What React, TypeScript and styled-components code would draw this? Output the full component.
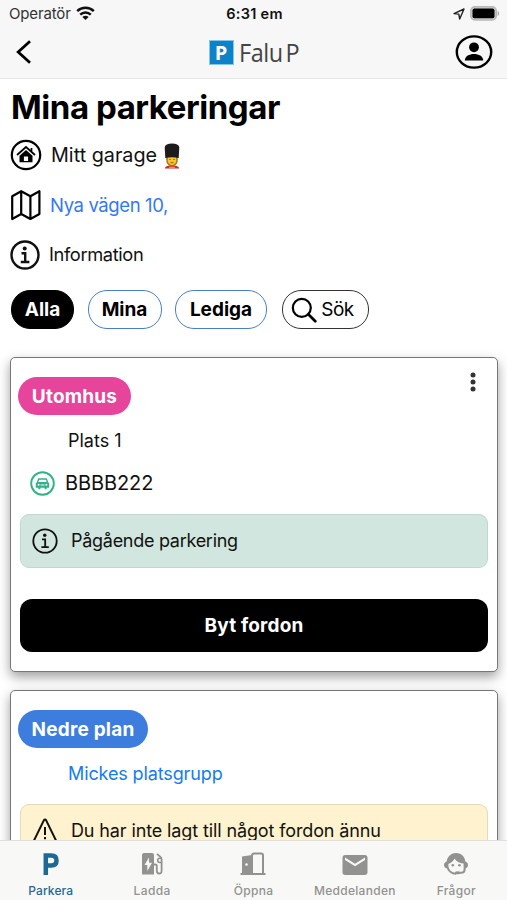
import React from "react";
import styled, { createGlobalStyle } from "styled-components";
import { MdEmail } from "react-icons/md";

const GlobalStyle = createGlobalStyle`
  * { box-sizing: border-box; }
  body { margin: 0; background: #fff; font-family: Inter, "Liberation Sans", sans-serif; color: #111; }
  svg { display: block; flex: none; }
  button { font: inherit; color: inherit; background: none; border: 0; padding: 0; }
`;

const Label = styled.span<{ $size: number; $weight?: number; $track?: number; $color?: string }>`
  font-size: ${(p) => p.$size}px;
  font-weight: ${(p) => p.$weight ?? 400};
  letter-spacing: ${(p) => p.$track ?? 0}px;
  color: ${(p) => p.$color ?? "inherit"};
  line-height: 1.2;
  white-space: nowrap;
`;

const Screen = styled.div`
  display: flex;
  flex-direction: column;
  height: 100vh;
  overflow: hidden;
`;

const Header = styled.header`
  height: 79px;
  flex: none;
  background: #f7f7f7;
  border-bottom: 1px solid #e6e6e6;
`;

const StatusBar = styled.div`
  display: grid;
  grid-template-columns: 1fr auto 1fr;
  align-items: center;
  height: 27px;
  padding: 0 7px 0 9px;
`;

const StatusGroup = styled.div<{ $end?: boolean }>`
  display: flex;
  align-items: center;
  justify-content: ${(p) => (p.$end ? "flex-end" : "flex-start")};
  gap: 5px;
`;

const NavBar = styled.div`
  display: grid;
  grid-template-columns: 1fr auto 1fr;
  align-items: center;
  height: 50px;
  padding: 0 14px 0 16px;
  > :last-child { justify-self: end; }
`;

const Brand = styled.div`
  display: flex;
  align-items: center;
  gap: 5px;
  width: 92px;
`;

const BrandMark = styled.span`
  display: grid;
  place-items: center;
  flex: none;
  width: 25px;
  height: 25px;
  background: #0c83c9;
  border: 1px solid #86c5e8;
  color: #fff;
  font: 700 20px/23px "Open Sans", sans-serif;
`;

const BrandName = styled.span`
  font: 400 25.5px/30px "Open Sans", sans-serif;
  letter-spacing: -0.5px;
  word-spacing: -3px;
  color: #444;
  white-space: nowrap;
  transform: scaleX(0.92);
  transform-origin: left center;
`;

const Content = styled.main`
  flex: 1;
  min-height: 0;
  overflow: hidden;
  padding: 0 9px 0 10px;
`;

const Title = styled.h1`
  margin: 0;
  height: 51px;
  padding: 8px 0 0 1px;
  font-size: 33px;
  line-height: 40px;
  font-weight: 700;
  letter-spacing: -0.45px;
  color: #000;
  white-space: nowrap;
`;

const InfoRow = styled.div<{ $gap: number }>`
  display: flex;
  align-items: center;
  height: 50px;
  gap: ${(p) => p.$gap}px;
`;

const GarageName = styled.div`
  display: flex;
  align-items: center;
  gap: 6px;
  padding-top: 2px;
`;

const Filters = styled.div`
  display: flex;
  align-items: center;
  gap: 13.5px;
  height: 39px;
  margin: 10px 0 28px 1px;
`;

const Pill = styled.button<{ $width: number; $tone: "solid" | "blue" | "dark" }>`
  display: flex;
  align-items: center;
  justify-content: center;
  gap: 4px;
  width: ${(p) => p.$width}px;
  height: 39px;
  padding-top: 1px;
  padding-right: ${(p) => (p.$tone === "dark" ? 5 : 0)}px;
  border-radius: 19px;
  border: 1.5px solid ${(p) => (p.$tone === "blue" ? "#477fc4" : p.$tone === "dark" ? "#333" : "#000")};
  background: ${(p) => (p.$tone === "solid" ? "#000" : "#fff")};
  color: ${(p) => (p.$tone === "solid" ? "#fff" : "#000")};
  &:last-child { margin-left: 1px; }
`;

const Card = styled.article`
  position: relative;
  height: 315px;
  margin-bottom: 18px;
  padding: 20px 9px 0;
  border: 1px solid #777;
  border-radius: 5px;
  background: #fff;
  box-shadow: 0 5px 12px rgba(0, 0, 0, 0.38);
`;

const Tag = styled.div<{ $color: string; $width: number }>`
  display: flex;
  align-items: center;
  justify-content: center;
  width: ${(p) => p.$width}px;
  height: 38px;
  margin: -1px 0 0 -2px;
  padding-top: 2px;
  border-radius: 19px;
  background: ${(p) => p.$color};
`;

const Place = styled.div`
  display: flex;
  align-items: center;
  height: 50px;
  padding: 2px 0 0 48px;
`;

const Vehicle = styled.div`
  display: flex;
  align-items: center;
  gap: 10px;
  height: 36px;
  padding-left: 10px;
`;

const Notice = styled.div<{ $warn?: boolean }>`
  display: flex;
  align-items: center;
  gap: 13px;
  height: 54px;
  margin-top: ${(p) => (p.$warn ? 6 : 13)}px;
  padding-left: 11px;
  border: 1px solid ${(p) => (p.$warn ? "#e3dabb" : "#bfd9ce")};
  border-radius: 9px;
  background: ${(p) => (p.$warn ? "#fff2ce" : "#d1e6de")};
`;

const Action = styled.button`
  display: block;
  width: 100%;
  height: 53px;
  margin-top: 31px;
  padding-top: 2px;
  border-radius: 12px;
  background: #000;
`;

const MoreButton = styled.button`
  position: absolute;
  top: 14px;
  right: 21px;
`;

const TabBar = styled.nav`
  display: grid;
  grid-template-columns: repeat(5, 1fr);
  flex: none;
  height: 60px;
  background: #f8f8f7;
  border-top: 1px solid #dededb;
`;

const Tab = styled.div<{ $active?: boolean }>`
  display: flex;
  flex-direction: column;
  align-items: center;
  padding-top: 9px;
  gap: 7px;
  color: ${(p) => (p.$active ? "#1c6a94" : "#929290")};
`;

const TabIcon = styled.div`
  display: grid;
  place-items: center;
  height: 27px;
`;

const Wifi = () => (
  <svg width="19" height="15" viewBox="0 0 19 15" fill="none" stroke="#111" strokeWidth="2.5">
    <path d="M1.2 5.2C5.8.7 13.2.7 17.8 5.2M4.2 8.6c3-2.9 7.6-2.9 10.6 0" />
    <path d="M9.5 14 6.4 11c1.7-1.6 4.5-1.6 6.2 0Z" fill="#111" stroke="none" />
  </svg>
);

const LocationArrow = () => (
  <svg width="12" height="12" viewBox="0 0 12 12" fill="none" stroke="#222" strokeWidth="1.4" strokeLinejoin="round">
    <path d="M1 5.6 11 1 6.7 11 5.8 6.1Z" />
  </svg>
);

const Battery = () => (
  <svg width="30" height="15" viewBox="0 0 30 15">
    <rect x=".8" y=".8" width="25.5" height="13.2" rx="4" fill="#ccc" stroke="#b8b8b8" strokeWidth="1.4" />
    <rect x="2.5" y="2.5" width="22" height="9.8" rx="2" fill="#000" />
    <path d="M27.6 5v5c2-.8 2-4.2 0-5Z" fill="#aaa" />
  </svg>
);

const BackIcon = () => (
  <svg width="16" height="24" viewBox="0 0 16 24" fill="none" stroke="#000" strokeWidth="2.8">
    <path d="M14 1.2 2.2 12 14 22.8" />
  </svg>
);

const ProfileIcon = () => (
  <svg width="38" height="34" viewBox="0 0 38 34">
    <ellipse cx="19" cy="17" rx="17.2" ry="15.6" fill="none" stroke="#000" strokeWidth="2.4" />
    <circle cx="19" cy="12.3" r="4.9" />
    <path d="M9.8 25.5c0-4.4 4.6-6.5 9.2-6.5s9.2 2.1 9.2 6.5Z" />
  </svg>
);

const GarageIcon = () => (
  <svg width="32" height="32" viewBox="0 0 32 32">
    <circle cx="16" cy="16" r="14.2" fill="none" stroke="#000" strokeWidth="2.2" />
    <path d="m7 16 9-8 9 8M21.5 9v4" fill="none" stroke="#000" strokeWidth="1.7" />
    <path d="m16 11 6.5 5.800v6.500h-13v-6.500Z" />
    <path d="M13.900 17.500h4.200v4.500h-4.200z" fill="#fff" />
  </svg>
);

const Guard = () => (
  <svg width="18" height="26" viewBox="0 0 18 26">
    <path d="M1.8 25.500c.4-2.200 3.200-2.900 5.200-2.900h4c2 0 4.800.7 5.200 2.900Z" fill="#c42c27" />
    <path d="M3 13h12l-.4 5.500c-.4 2.700-3.200 5-5.600 5s-5.200-2.300-5.600-5Z" fill="#a9701c" />
    <path d="M4.800 13.500h8.400v5c-.5 2.200-2.500 3.500-4.200 3.500s-3.700-1.300-4.200-3.500Z" fill="#f7c62c" />
    <path d="M6 24.300h6" stroke="#edb52d" strokeWidth="1" />
    <path d="M1.700 4.200Q2.500.5 9 .5t7.300 3.700L15.700 15Q9 13.400 2.300 15Z" fill="#1d1b1b" />
    <path d="M6.300 16.500h1.400M10.300 16.500h1.400M7.500 19.300q1.500 1 3 0" stroke="#79501c" strokeWidth=".9" fill="none" />
  </svg>
);

const MapIcon = () => (
  <svg width="32" height="32" viewBox="0 0 32 32" fill="none" stroke="#000" strokeWidth="2.2" strokeLinejoin="round">
    <path d="m2.200 7.200 9-5 9.200 5 9-5v22.800l-9 5-9.200-5-9 5ZM11.200 2.200v22.800M20.400 7.200v22.800" />
  </svg>
);

const InfoIcon = ({ size, weight }: { size: number; weight: number }) => (
  <svg width={size} height={size} viewBox="0 0 30 30" fill="none" stroke="currentColor" strokeWidth={weight}>
    <circle cx="15" cy="15" r="13.5" />
    <circle cx="14.7" cy="8.4" r="2" fill="currentColor" stroke="none" />
    <path d="M11.5 13.200h3.700v8.500M10.800 22h8.600" />
  </svg>
);

const SearchIcon = () => (
  <svg width="26" height="26" viewBox="0 0 26 26" fill="none" stroke="#000" strokeLinecap="round">
    <circle cx="10.8" cy="10.8" r="9" strokeWidth="2.2" />
    <path d="m17.300 17.300 7 7" strokeWidth="2.7" />
  </svg>
);

const CarIcon = () => (
  <svg width="25" height="25" viewBox="0 0 25 25">
    <circle cx="12.5" cy="12.5" r="11.3" fill="none" stroke="#2db384" strokeWidth="1.9" />
    <path d="M8.200 7.200h8.600l1.400 4 1 1v4.600h-2.600v1.400h-2v-1.400H10.400v1.400h-2v-1.400H5.800v-4.600l1-1Z" fill="#2db384" />
    <path d="M9.200 8.800h6.600l.9 2.300H8.300Z" fill="#fff" />
    <circle cx="8.6" cy="13.7" r="1" fill="#fff" />
    <circle cx="16.4" cy="13.7" r="1" fill="#fff" />
    <path d="M10.500 14h4" stroke="#fff" strokeWidth="1" />
  </svg>
);

const WarningIcon = () => (
  <svg width="26" height="26" viewBox="0 0 26 26" fill="none" stroke="#111" strokeWidth="2" strokeLinejoin="round">
    <path d="M11.700 2.600q1.300-2 2.600 0L24.500 23.500q.4 1.500-1.200 1.500H2.700q-1.600 0-1.200-1.500Z" />
    <path d="M13 9v8M13 19v2.300" />
  </svg>
);

const MoreIcon = () => (
  <svg width="6" height="20" viewBox="0 0 6 20" fill="#333">
    <circle cx="3" cy="3" r="2.5" /><circle cx="3" cy="10" r="2.5" /><circle cx="3" cy="17" r="2.5" />
  </svg>
);

const ParkIcon = () => (
  <svg width="18" height="24" viewBox="0 0 18 24" fill="none" stroke="currentColor" strokeWidth="4.5">
    <path d="M3.800 23V3.500h5.500q5.200 0 5.200 5T9.300 13.500H3.800" />
  </svg>
);

const ChargeIcon = () => (
  <svg width="23" height="24" viewBox="0 0 23 24">
    <path d="M3 1h8q2 0 2 2v19.500H1V3q0-2 2-2Z" fill="currentColor" />
    <path d="M8 5.500 3.500 13H6.300v6L11 10.800H8Z" fill="#f8f8f7" />
    <path d="M13 12.500h1.200q1.600 0 1.600 1.700v4.500q0 2.800 2.400 2.800t2.400-2.800V7.500q0-1.500-1.200-2.600L16 1.800" fill="none" stroke="currentColor" strokeWidth="1.8" />
    <path d="M20.500 6.200h-1.800q-2 0-2 2.100t2 2.200h1.800" fill="none" stroke="currentColor" strokeWidth="1.6" />
  </svg>
);

const DoorIcon = () => (
  <svg width="26" height="24" viewBox="0 0 26 24" fill="currentColor">
    <path d="M2 4.500 12 3V22H2Z" />
    <path d="M12 4q0-2.500 2-2.500h7.200q1.800 0 1.800 1.800V22H12Z" fill="none" stroke="currentColor" strokeWidth="2" />
    <path d="M.5 21h25v2H.5Z" />
    <circle cx="6.5" cy="12.5" r="1.3" fill="#f8f8f7" />
  </svg>
);

const AgentIcon = () => (
  <svg width="26" height="24" viewBox="0 0 26 24">
    <path d="M3.500 12C3.500 5 7.500 1 13 1s9.500 4 9.500 10.500c-5 .3-8.800-1.500-11-5C10.300 9.500 7 12.200 3.500 12Z" fill="currentColor" />
    <path d="M4.400 11v3.500c.8 4.500 4.300 7.300 8.600 7.300M21.600 11v6.500q0 3.200-3.300 3.200H13" fill="none" stroke="currentColor" strokeWidth="2" />
    <path d="M4 9.500q-3 .8-3 3.500T4 16.500ZM22 9.500q3 .8 3 3.500t-3 3.500Z" fill="currentColor" />
    <circle cx="9.8" cy="13.3" r="1.3" fill="currentColor" />
    <circle cx="16.4" cy="13.3" r="1.3" fill="currentColor" />
    <rect x="12" y="19.4" width="5" height="2.8" rx="1.3" fill="currentColor" />
  </svg>
);

const tabs = [
  { name: "Parkera", icon: <ParkIcon />, active: true, track: 0.1 },
  { name: "Ladda", icon: <ChargeIcon />, track: 0.35 },
  { name: "Öppna", icon: <DoorIcon />, track: 0.3 },
  { name: "Meddelanden", icon: <MdEmail size={30} />, track: 0.28 },
  { name: "Frågor", icon: <AgentIcon />, track: 0.3 },
];

export default function App() {
  return (
    <Screen>
      <GlobalStyle />
      <Header>
        <StatusBar>
          <StatusGroup>
            <Label $size={15} $track={-0.15} $color="#333">Operatör</Label>
            <Wifi />
          </StatusGroup>
          <Label $size={14.5} $weight={600} $track={0.3}>6:31 em</Label>
          <StatusGroup $end><LocationArrow /><Battery /></StatusGroup>
        </StatusBar>
        <NavBar>
          <BackIcon />
          <Brand><BrandMark>P</BrandMark><BrandName>Falu P</BrandName></Brand>
          <ProfileIcon />
        </NavBar>
      </Header>
      <Content>
        <Title>Mina parkeringar</Title>
        <InfoRow $gap={9}>
          <GarageIcon />
          <GarageName>
            <Label $size={19.8}>Mitt garage</Label>
            <Guard />
          </GarageName>
        </InfoRow>
        <InfoRow $gap={8}>
          <MapIcon />
          <Label $size={18.5} $track={-0.38} $color="#3478f6">Nya vägen 10,</Label>
        </InfoRow>
        <InfoRow $gap={9}>
          <InfoIcon size={30} weight={2.4} />
          <Label $size={18.3} $track={-0.38}>Information</Label>
        </InfoRow>
        <Filters>
          <Pill $width={63} $tone="solid"><Label $size={19} $weight={700}>Alla</Label></Pill>
          <Pill $width={74} $tone="blue"><Label $size={19} $weight={700}>Mina</Label></Pill>
          <Pill $width={92} $tone="blue"><Label $size={19} $weight={700}>Lediga</Label></Pill>
          <Pill $width={87} $tone="dark"><SearchIcon /><Label $size={19} $track={-0.5}>Sök</Label></Pill>
        </Filters>
        <Card>
          <Tag $color="#e6459b" $width={113}><Label $size={19} $weight={700} $track={0.2} $color="#fff">Utomhus</Label></Tag>
          <MoreButton aria-label="Mer"><MoreIcon /></MoreButton>
          <Place><Label $size={18}>Plats 1</Label></Place>
          <Vehicle><CarIcon /><Label $size={20} $track={-0.1}>BBBB222</Label></Vehicle>
          <Notice><InfoIcon size={26} weight={2.1} /><Label $size={18} $track={-0.28}>Pågående parkering</Label></Notice>
          <Action><Label $size={19} $weight={700} $track={0.15} $color="#fff">Byt fordon</Label></Action>
        </Card>
        <Card>
          <Tag $color="#3d7ddd" $width={130}><Label $size={19} $weight={700} $track={0.2} $color="#fff">Nedre plan</Label></Tag>
          <Place><Label $size={18} $track={-0.12} $color="#127cf2">Mickes platsgrupp</Label></Place>
          <Notice $warn><WarningIcon /><Label $size={18} $track={-0.12}>Du har inte lagt till något fordon ännu</Label></Notice>
        </Card>
      </Content>
      <TabBar>
        {tabs.map((tab) => (
          <Tab key={tab.name} $active={tab.active}>
            <TabIcon>{tab.icon}</TabIcon>
            <Label $size={12} $weight={500} $track={tab.track}>{tab.name}</Label>
          </Tab>
        ))}
      </TabBar>
    </Screen>
  );
}
